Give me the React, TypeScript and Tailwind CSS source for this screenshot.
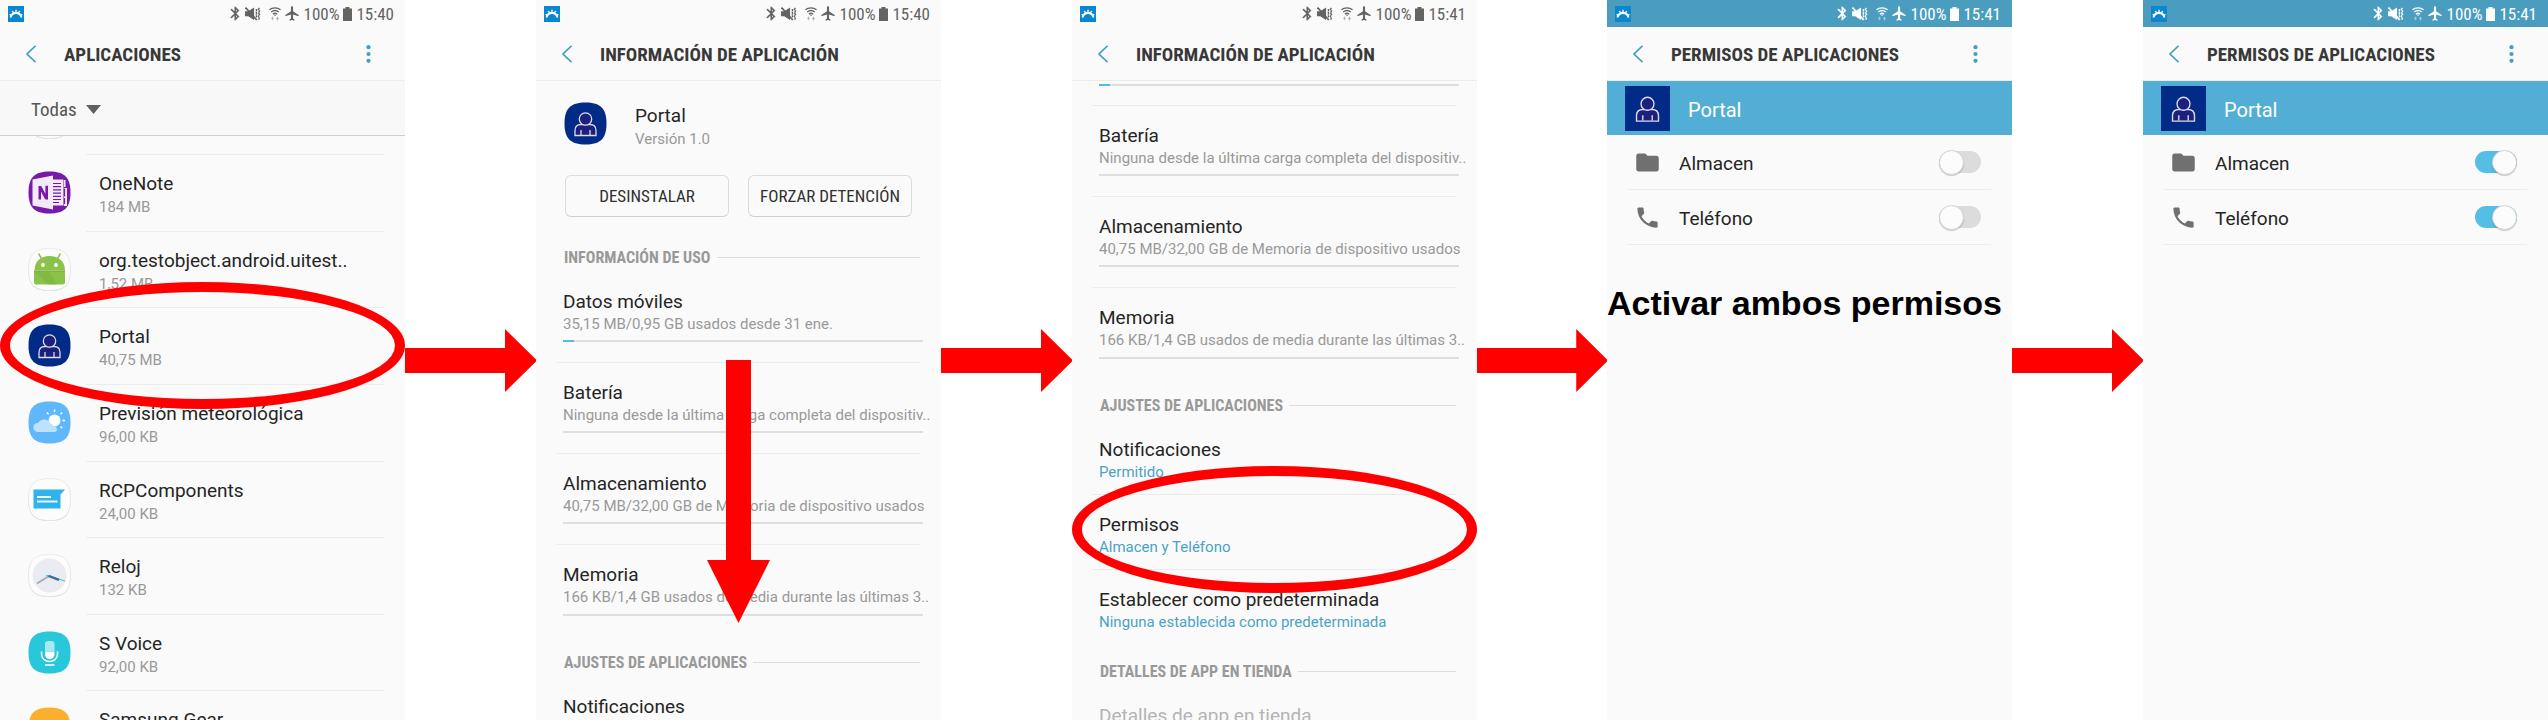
import type { ReactNode } from "react";

const condensed = "font-['Roboto_Condensed','Roboto',sans-serif]";

/* ---------- status bar ---------- */

function StatusBar({ time, dark = false }: { time: string; dark?: boolean }) {
  return (
    <div
      className={`flex h-[27px] shrink-0 items-center pl-2 pr-[11px] ${
        dark ? "bg-[#4a9dbf] text-white" : "text-[#636363]"
      }`}
    >
      <svg className="h-4 w-4" viewBox="0 0 16 16" aria-hidden="true">
        <rect width="16" height="16" fill="#0a87d0" />
        <path d="M2.500 11.500C3.200 8.500 5.200 7 8 7s4.800 1.500 5.500 4.500" stroke="#fff" strokeWidth="2" fill="none" />
        <path d="M1.600 8.300l1.800 1.200M4.400 5l1.200 2M8 3.800V7M11.600 5l-1.200 2M14.400 8.300l-1.800 1.200" stroke="#fff" strokeWidth="1.400" />
      </svg>
      <div className="ml-auto flex items-center">
        <svg className="h-[15px] w-[10px]" viewBox="4 1 15 22" preserveAspectRatio="none" fill="currentColor" stroke="currentColor" strokeWidth=".5" aria-hidden="true">
          <path d="M17.710 7.710L12 2h-1v7.590L6.410 5 5 6.410 10.590 12 5 17.590 6.410 19 11 14.410V22h1l5.710-5.710-4.300-4.290 4.300-4.290zM13 5.830l1.880 1.880L13 9.590V5.830zm1.880 10.460L13 18.170v-3.760l1.880 1.880z" />
        </svg>
        <svg className="ml-[5px] h-[14px] w-[16px]" viewBox="0 0 15 14" preserveAspectRatio="none" fill="currentColor" aria-hidden="true">
          <path d="M0 4.300h3L8.500 0.500v12.500L3 9.300H0z" />
          <path d="M0.500 0.500L11 13" stroke="currentColor" strokeWidth="1.600" />
          <path d="M10.700 2v8.500M13.500 .8l-1 1.700 1.200 1.700-1.200 1.700 1.200 1.700-1.200 1.700 1.200 1.700-1 1.700" stroke="currentColor" strokeWidth="1.300" strokeDasharray="2.600 .5" fill="none" />
        </svg>
        <svg className="ml-2 h-[14px] w-[12px]" viewBox="0 0 12 14" fill="none" stroke="currentColor" strokeWidth="1.400" aria-hidden="true">
          <path d="M.4 2.800C3.500.2 8.500.2 11.600 2.800M2.200 5C4.500 3.100 7.500 3.100 9.800 5M4 7.100c1.300-1 2.700-1 4 0" />
          <path d="M6 9.300L4.900 7.700h2.200z" fill="currentColor" stroke="none" />
          <path d="M2 11.300h3L3.500 13.500zM7 11.700h3L8.500 9.500z" fill="currentColor" opacity=".45" stroke="none" />
          <path d="M3.500 9.500v2M8.500 11v2.500" opacity=".4" />
        </svg>
        <svg className="ml-1 h-[15px] w-[14px]" viewBox="1.500 1.500 20 21" preserveAspectRatio="none" fill="currentColor" aria-hidden="true">
          <path d="M21 16v-2l-8-5V3.500c0-.83-.67-1.500-1.500-1.500S10 2.670 10 3.500V9l-8 5v2l8-2.500V19l-2 1.500V22l3.500-1 3.500 1v-1.500L13 19v-5.500l8 2.500z" />
        </svg>
        <span className={`${condensed} ml-[5px] pt-px text-[17px] leading-5`}>100%</span>
        <svg className="ml-1 h-[14px] w-[9px]" viewBox="0 0 9 14" fill="currentColor" aria-hidden="true">
          <path d="M2.500 0h4v1.500H9V14H0V1.500h2.500z" />
        </svg>
        <span className={`${condensed} ml-1 pt-px text-[17px] leading-5`}>{time}</span>
      </div>
    </div>
  );
}

function Header({ title, menu = false }: { title: string; menu?: boolean }) {
  return (
    <header className="flex h-[54px] shrink-0 items-center border-b border-[#ececec] pl-[26px] pr-[34px] pt-px">
      <button type="button" aria-label="Atrás" className="text-[#439fc0]">
        <svg className="h-[18px] w-[10px]" viewBox="0 0 10 18" fill="none" stroke="currentColor" strokeWidth="1.600" aria-hidden="true">
          <path d="M9.500 .8L1 9l8.500 8.200" />
        </svg>
      </button>
      <h1 className={`${condensed} ml-7 pt-0.5 text-[19px] font-bold leading-6 text-[#383838]`}>{title}</h1>
      {menu && (
        <button type="button" aria-label="Más opciones" className="ml-auto text-[#439fc0]">
          <svg className="h-[18px] w-[5px]" viewBox="0 0 5 18" fill="currentColor" aria-hidden="true">
            <circle cx="2.500" cy="2.200" r="2.100" />
            <circle cx="2.500" cy="9" r="2.100" />
            <circle cx="2.500" cy="15.800" r="2.100" />
          </svg>
        </button>
      )}
    </header>
  );
}

/* ---------- app icons ---------- */

const squircle = "M21.500 .5C36.500 .5 42.500 6.500 42.500 21.500S36.500 42.500 21.500 42.500.5 36.500 .5 21.500 6.500 .5 21.500 .5z";

function AppIcon({ fill, plain = false, children }: { fill: string; plain?: boolean; children?: ReactNode }) {
  return (
    <svg className="h-[43px] w-[43px] shrink-0" viewBox="0 0 43 43" aria-hidden="true">
      {plain && <path d={squircle} fill="#c6c6c6" transform="translate(0 .5)" />}
      <path d={squircle} fill={fill} stroke={plain ? "#e6e6e6" : "none"} strokeWidth=".8" />
      {children}
    </svg>
  );
}

function Person() {
  return (
    <g fill="#1b1f7d" stroke="#dcdce4" strokeWidth="1.300">
      <path d="M11 33.500v-5c0-4 2.600-6 6-6h9c3.400 0 6 2 6 6v5z" />
      <circle cx="21.500" cy="17" r="6.200" />
      <path d="M17 33v-5M26 33v-5" />
    </g>
  );
}

const OneNoteIcon = () => (
  <AppIcon fill="#7719aa">
    <path d="M24 8.500h11.500v26H24z" fill="#f3eaf8" />
    <path d="M36 17h3v18h-3zM36 9h1.500v7H36z" fill="#f3eaf8" />
    <path d="M25 12.500h8M25 15.700h8M25 18.900h8M25 22.100h8M25 25.300h8M25 28.500h8M25 31.500h6" stroke="#7719aa" strokeWidth="1.200" />
    <path d="M36.500 17.500v8M36.500 27v6" stroke="#7719aa" strokeWidth="1.200" />
    <path d="M4.500 8.500L25 4.500v34L4.500 34.500z" fill="#f3eaf8" />
    <path d="M10.500 28.500V15h2.700l4.200 7.800V14.800H20v13.700h-2.700L13 20.700v7.800z" fill="#7719aa" />
  </AppIcon>
);

const AndroidIcon = () => (
  <AppIcon fill="#fcfcfc" plain>
    <path d="M10.500 5.500l3.500 6M32.500 5.500l-3.500 6" stroke="#8bc34a" strokeWidth="1.500" />
    <path d="M6.500 22.500C6.500 13 13 8 21.500 8S37 13 37 22.500z" fill="#8bc34a" />
    <path d="M6 23h31v11.500c0 1.200-.8 2-2 2H8c-1.200 0-2-.8-2-2z" fill="#8bc34a" />
    <path d="M7 24h14l8 12.500H20z" fill="#7cb342" opacity=".6" />
    <path d="M6 23h31" stroke="#6fa03a" strokeWidth=".8" />
    <circle cx="15" cy="17" r="1.900" fill="#fff" />
    <circle cx="28" cy="17" r="1.900" fill="#fff" />
  </AppIcon>
);

const PortalIcon = () => (
  <AppIcon fill="#012b86">
    <Person />
  </AppIcon>
);

const WeatherIcon = () => (
  <AppIcon fill="#5fb8fb">
    <circle cx="26.500" cy="19.500" r="6" fill="#fff" />
    <path d="M26.500 8.500v2.500M18.800 11.500l1.800 1.800M34.200 11.500l-1.800 1.800M34.500 19.500H37M32.500 25.500l1.800 1.800" stroke="#fff" strokeWidth="1.400" />
    <path d="M9.500 31a4.500 4.500 0 0 1 .6-9 7 7 0 0 1 12.600.8 4.700 4.700 0 0 1 3.300 2.700c2.200.2 3 1.500 3 3s-1 2.500-2.500 2.500z" fill="#bfe2fc" />
  </AppIcon>
);

const MessageIcon = () => (
  <AppIcon fill="#fcfcfc" plain>
    <path d="M5.500 11.500h31.500l-4.500 5v14H5.500z" fill="#2fb3ea" />
    <path d="M9 19h14M9 23.500h20.500" stroke="#e9f7fd" strokeWidth="2.200" />
  </AppIcon>
);

const ClockIcon = () => (
  <AppIcon fill="#fcfcfc" plain>
    <circle cx="21.500" cy="21.500" r="17" fill="#ebecf2" />
    <path d="M21 22L9 29.500" stroke="#a3a8bd" strokeWidth="1.800" />
    <path d="M18 21.300l19 5.700" stroke="#3ecadb" strokeWidth="1.200" />
    <path d="M20.500 21.800l10.500 4" stroke="#3a6f9c" strokeWidth="2.400" />
  </AppIcon>
);

const VoiceIcon = () => (
  <AppIcon fill="#29c7da">
    <path d="M17 20V13c0-2 1-3 3-3h3.500c2 0 3 1 3 3v7z" fill="#a9e8ef" />
    <path d="M17 20.500h9.500v2.800a4.750 4.750 0 0 1-9.500 0z" fill="#fff" />
    <path d="M13.500 20.500V23c0 5 4 7.500 8 7.500s8-2.500 8-7.500v-2.500M17 34h9.500" stroke="#fff" strokeWidth="1.500" fill="none" />
  </AppIcon>
);

const GearIcon = () => <AppIcon fill="#fbb02d" />;

const apps = [
  { name: "OneNote", size: "184 MB", Icon: OneNoteIcon },
  { name: "org.testobject.android.uitest..", size: "1,52 MB", Icon: AndroidIcon },
  { name: "Portal", size: "40,75 MB", Icon: PortalIcon },
  { name: "Previsión meteorológica", size: "96,00 KB", Icon: WeatherIcon },
  { name: "RCPComponents", size: "24,00 KB", Icon: MessageIcon },
  { name: "Reloj", size: "132 KB", Icon: ClockIcon },
  { name: "S Voice", size: "92,00 KB", Icon: VoiceIcon },
  { name: "Samsung Gear", size: "", Icon: GearIcon },
];

function AppRow({ name, size, icon }: { name: string; size: string; icon: ReactNode }) {
  return (
    <a href="#" className="flex pl-7 pr-[21px]">
      <span className="mt-4 flex w-[58px] shrink-0">{icon}</span>
      <span className="flex min-w-0 flex-1 flex-col border-b border-[#ececec] pl-[13px] pt-[17px]">
        <span className="truncate text-[19px] leading-6 text-[#252525]">{name}</span>
        <span className="text-[15px] leading-[22px] text-[#999]">{size}</span>
      </span>
    </a>
  );
}

/* ---------- information rows ---------- */

function Section({ title }: { title: string }) {
  return (
    <div className="flex h-[41px] shrink-0 items-end pb-1 pl-7 pr-[21px]">
      <h2 className={`${condensed} text-[16px] font-bold leading-5 text-[#999]`}>{title}</h2>
      <span className="mb-2.5 ml-1.5 h-px flex-1 bg-[#dcdcdc]" />
    </div>
  );
}

function UsageBar({ used }: { used: number }) {
  return (
    <span className="-mr-[3px] block h-0.5 bg-[#dedede]">
      <span className="block h-full bg-[#4fbde4]" style={{ width: `${used}%` }} />
    </span>
  );
}

function UsageRow({ title, detail, used = 0, last = false }: { title: string; detail: string; used?: number; last?: boolean }) {
  return (
    <div className="h-[91px] shrink-0 pl-5 pr-[21px]">
      <div className={`flex h-full flex-col justify-between pb-5 pl-[7px] pt-[18px] ${last ? "" : "border-b border-[#ececec]"}`}>
        <div className="flex flex-col">
          <span className="text-[19px] leading-6 text-[#252525]">{title}</span>
          <span className="whitespace-nowrap text-[15px] leading-5 text-[#999]">{detail}</span>
        </div>
        <UsageBar used={used} />
      </div>
    </div>
  );
}

function LinkRow({ title, detail, last = false, muted = false }: { title: string; detail?: string; last?: boolean; muted?: boolean }) {
  return (
    <a href="#" className="block h-[75px] shrink-0 pl-5 pr-[21px]">
      <span className={`flex h-full flex-col pl-[7px] pt-[18px] ${last ? "" : "border-b border-[#ececec]"}`}>
        <span className={`text-[19px] leading-6 ${muted ? "text-[#b4b4b4]" : "text-[#252525]"}`}>{title}</span>
        {detail && <span className="whitespace-nowrap text-[15px] leading-5 text-[#4aa3c4]">{detail}</span>}
      </span>
    </a>
  );
}

const battery = { title: "Batería", detail: "Ninguna desde la última carga completa del dispositiv.." };
const storage = { title: "Almacenamiento", detail: "40,75 MB/32,00 GB de Memoria de dispositivo usados" };
const memory = { title: "Memoria", detail: "166 KB/1,4 GB usados de media durante las últimas 3.." };
const data = { title: "Datos móviles", detail: "35,15 MB/0,95 GB usados desde 31 ene.", used: 3 };

/* ---------- permissions ---------- */

function PermissionRow({ id, label, on, icon }: { id: string; label: string; on: boolean; icon: string }) {
  return (
    <div className="h-[55px] shrink-0 pl-5 pr-[21px]">
      <label htmlFor={id} className="flex h-full items-center border-b border-[#ececec] pl-[7px] pr-2.5">
        <svg className="h-[27px] w-[27px] text-[#707070]" viewBox="0 0 24 24" fill="currentColor" aria-hidden="true">
          <path d={icon} />
        </svg>
        <span className="ml-[18px] pt-[3px] text-[19px] leading-6 text-[#252525]">{label}</span>
        <input id={id} type="checkbox" role="switch" defaultChecked={on} className="peer sr-only" />
        <span className="ml-auto flex h-[22px] w-[42px] items-center rounded-full bg-[#dcdcdc] peer-checked:justify-end peer-checked:bg-[#55bfe3]">
          <span className="h-[25px] w-[25px] rounded-full border border-[#d4d4d4] bg-[#fcfcfc] shadow-[0_1px_1px_rgba(0,0,0,0.2)]" />
        </span>
      </label>
    </div>
  );
}

const folderPath =
  "M10 4H4c-1.100 0-1.990.9-1.990 2L2 18c0 1.100.9 2 2 2h16c1.100 0 2-.9 2-2V8c0-1.100-.9-2-2-2h-8l-2-2z";
const phonePath =
  "M6.620 10.790c1.440 2.830 3.760 5.140 6.590 6.590l2.200-2.200c.27-.27.67-.36 1.020-.24 1.120.37 2.330.57 3.570.57.55 0 1 .45 1 1V20c0 .55-.45 1-1 1-9.390 0-17-7.610-17-17 0-.55.45-1 1-1h3.500c.55 0 1 .45 1 1 0 1.250.2 2.450.57 3.570.11.35.03.74-.25 1.020l-2.200 2.200z";

function PermissionsScreen({ id, on, children }: { id: string; on: boolean; children?: ReactNode }) {
  return (
    <Screen>
      <StatusBar time="15:41" dark />
      <Header title="PERMISOS DE APLICACIONES" menu />
      <div className="flex h-[54px] shrink-0 items-center bg-[#53aed6] pl-[18px]">
        <svg className="h-[45px] w-[45px]" viewBox="0 0 43 43" aria-hidden="true">
          <rect width="43" height="43" fill="#012b86" />
          <Person />
        </svg>
        <span className="ml-[18px] pt-[3px] text-xl leading-6 text-white">Portal</span>
      </div>
      <PermissionRow id={`${id}-storage`} label="Almacen" on={on} icon={folderPath} />
      <PermissionRow id={`${id}-phone`} label="Teléfono" on={on} icon={phonePath} />
      {children}
    </Screen>
  );
}

/* ---------- frame pieces ---------- */

function Screen({ children }: { children: ReactNode }) {
  return <section className="relative flex min-w-0 flex-col overflow-hidden bg-[#fafafa]">{children}</section>;
}

function NextArrow() {
  return (
    <div className="flex pt-[329px]" aria-hidden="true">
      <svg className="h-[63px] w-full overflow-visible" viewBox="0 0 131 63" preserveAspectRatio="none">
        <path d="M0 19h100V0l32 31.500L100 63V44H0z" fill="#f00" />
      </svg>
    </div>
  );
}

function Ring({ place }: { place: string }) {
  return <div className={`pointer-events-none absolute inset-x-0 h-[127px] rounded-[50%] border-[10px] border-[#f00] ${place}`} />;
}

export default function App() {
  return (
    <main className="grid h-screen grid-cols-[405fr_131fr_405fr_131fr_405fr_130fr_405fr_131fr_405fr] overflow-hidden bg-white font-['Roboto',sans-serif]">
      <Screen>
        <StatusBar time="15:40" />
        <Header title="APLICACIONES" menu />
        <div className="flex h-[55px] shrink-0 items-center border-b border-[#cfcfcf] bg-[#f8f8f8] pl-[31px] pt-[3px]">
          <div className="relative flex items-center">
            <select aria-label="Filtro de aplicaciones" className={`${condensed} appearance-none bg-transparent pr-6 text-[19px] leading-6 text-[#555]`}>
              <option>Todas</option>
            </select>
            <svg className="pointer-events-none absolute right-0 h-[9px] w-[15px]" viewBox="0 0 15 9" aria-hidden="true">
              <path d="M0 0h15L7.500 9z" fill="#606060" />
            </svg>
          </div>
        </div>
        <div className="flex h-[19px] shrink-0 items-end overflow-hidden pl-7 pr-[21px]">
          <span className="w-[58px] shrink-0 pb-4">
            <AppIcon fill="#fcfcfc" plain />
          </span>
          <span className="flex-1 border-b border-[#ececec]" />
        </div>
        <div className="grid h-[613px] shrink-0 auto-rows-fr">
          {apps.map(({ name, size, Icon }) => (
            <AppRow key={name} name={name} size={size} icon={<Icon />} />
          ))}
        </div>
        <Ring place="top-[282px]" />
      </Screen>
      <NextArrow />

      <Screen>
        <StatusBar time="15:40" />
        <Header title="INFORMACIÓN DE APLICACIÓN" />
        <div className="flex shrink-0 pb-[25px] pl-7 pt-[21px]">
          <PortalIcon />
          <div className="ml-7 flex flex-col pt-0.5">
            <span className="text-[19px] leading-6 text-[#252525]">Portal</span>
            <span className="text-[15px] leading-[22px] text-[#999]">Versión 1.0</span>
          </div>
        </div>
        <div className="flex shrink-0 gap-[19px] px-[29px] pb-3.5">
          {["DESINSTALAR", "FORZAR DETENCIÓN"].map((label) => (
            <button
              key={label}
              type="button"
              className={`${condensed} h-[42px] flex-1 whitespace-nowrap rounded-md border border-[#dcdcdc] border-b-[#cfcfcf] text-[17px] leading-5 text-[#303030]`}
            >
              {label}
            </button>
          ))}
        </div>
        <Section title="INFORMACIÓN DE USO" />
        <UsageRow {...data} />
        <UsageRow {...battery} />
        <UsageRow {...storage} />
        <UsageRow {...memory} last />
        <Section title="AJUSTES DE APLICACIONES" />
        <LinkRow title="Notificaciones" />
        <svg className="pointer-events-none absolute left-[171px] top-[360px] h-[263px] w-[63px]" viewBox="0 0 63 263" aria-hidden="true">
          <path d="M19 0h25v200h19l-31.500 63L0 200h19z" fill="#f00" />
        </svg>
      </Screen>
      <NextArrow />

      <Screen>
        <StatusBar time="15:41" />
        <Header title="INFORMACIÓN DE APLICACIÓN" />
        <div className="shrink-0 pl-5 pr-[21px]">
          <div className="border-b border-[#ececec] pb-[19px] pl-[7px] pt-[3px]">
            <UsageBar used={data.used} />
          </div>
        </div>
        <UsageRow {...battery} />
        <UsageRow {...storage} />
        <UsageRow {...memory} last />
        <Section title="AJUSTES DE APLICACIONES" />
        <LinkRow title="Notificaciones" detail="Permitido" />
        <LinkRow title="Permisos" detail="Almacen y Teléfono" />
        <LinkRow title="Establecer como predeterminada" detail="Ninguna establecida como predeterminada" last />
        <Section title="DETALLES DE APP EN TIENDA" />
        <LinkRow title="Detalles de app en tienda" muted />
        <Ring place="top-[466px]" />
      </Screen>
      <NextArrow />

      <PermissionsScreen id="before" on={false}>
        <p className="mt-10 whitespace-nowrap font-['Liberation_Sans',sans-serif] text-[34px] font-bold leading-9 text-black">
          Activar ambos permisos
        </p>
      </PermissionsScreen>
      <NextArrow />

      <PermissionsScreen id="after" on />
    </main>
  );
}
